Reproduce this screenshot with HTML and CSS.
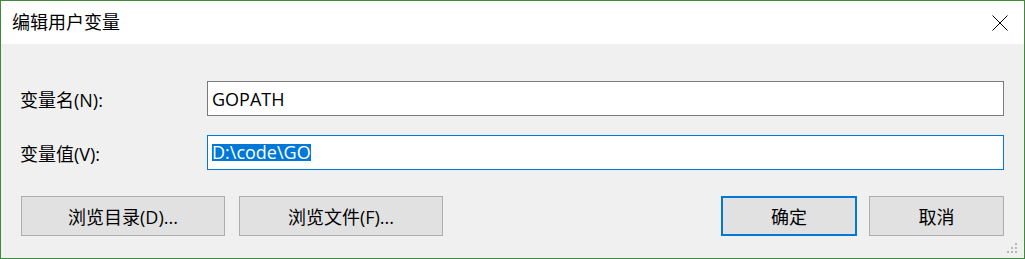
FILE: index.html
```html
<!DOCTYPE html>
<html lang="zh-CN">
<head>
  <meta charset="UTF-8" />
  <meta name="viewport" content="width=device-width, initial-scale=1.0"/>
  <title>编辑用户变量</title>
  <link rel="stylesheet" href="styles.css">
</head>
<body>
  <div class="window">
    <div class="titlebar">
      <span class="title">编辑用户变量</span>
      <button class="close-btn" title="关闭">
        <svg width="16" height="16" viewBox="0 0 16 16">
          <path d="M0.5 0.5 L15.5 15.5 M15.5 0.5 L0.5 15.5" stroke="#000" stroke-width="1" fill="none"/>
        </svg>
      </button>
    </div>

    <div class="content">
      <div class="form-row">
        <label class="field-label">变量名(N):</label>
        <div class="textbox">GOPATH</div>
      </div>
      <div class="form-row">
        <label class="field-label">变量值(V):</label>
        <div class="textbox focused"><span class="selected">D:\code\GO</span></div>
      </div>

      <div class="button-row">
        <div class="button-group">
          <button class="btn wide">浏览目录(D)...</button>
          <button class="btn wide">浏览文件(F)...</button>
        </div>
        <div class="button-group small-gap">
          <button class="btn default">确定</button>
          <button class="btn">取消</button>
        </div>
      </div>
    </div>

    <svg class="grip" width="12" height="12" viewBox="0 0 12 12">
      <rect x="8" y="0" width="2" height="2" fill="#b8b8b8"/>
      <rect x="4" y="4" width="2" height="2" fill="#b8b8b8"/>
      <rect x="8" y="4" width="2" height="2" fill="#b8b8b8"/>
      <rect x="0" y="8" width="2" height="2" fill="#b8b8b8"/>
      <rect x="4" y="8" width="2" height="2" fill="#b8b8b8"/>
      <rect x="8" y="8" width="2" height="2" fill="#b8b8b8"/>
    </svg>
  </div>
</body>
</html>
```

FILE: styles.css
```css
html, body { margin: 0; padding: 0; }
body { font-family: "Open Sans", "Noto Sans CJK SC", sans-serif; font-size: 18px; color: #000; background: #f0f0f0; }

.window {
  position: relative;
  width: 1025px;
  height: 259px;
  box-sizing: border-box;
  border: 1px solid #3f8a3a;
  background: #f0f0f0;
}

.titlebar {
  height: 43px;
  background: #fff;
  display: flex;
  align-items: center;
  justify-content: space-between;
  padding: 0 16px 0 11px;
}
.title { font-size: 18px; line-height: 24px; margin-top: -1px; }
.close-btn { border: none; background: none; padding: 0; width: 16px; height: 16px; display: flex; margin-top: 0; }

.content { padding: 37px 20px 0 19px; }

.form-row { display: flex; align-items: center; margin-bottom: 19px; }
.field-label { width: 187px; flex: none; }

.textbox {
  width: 798px;
  height: 35px;
  box-sizing: border-box;
  border: 1px solid #7a7a7a;
  background: #fff;
  padding: 0 4px;
  display: flex;
  align-items: center;
  line-height: 24px;
}
.textbox.focused { border-color: #0078d7; }
.selected {
  display: inline-block;
  background: #0078d7;
  color: #fff;
  line-height: 17px;
  height: 17px;
}

.button-row { display: flex; justify-content: space-between; margin-top: 26px; }
.button-group { display: flex; gap: 14px; margin-left: 1px; }
.button-group.small-gap { gap: 12px; margin-left: 0; }

.btn {
  font-family: inherit;
  font-size: 18px;
  color: #000;
  height: 40px;
  width: 135px;
  box-sizing: border-box;
  background: #e1e1e1;
  border: 1px solid #adadad;
  padding: 0;
}
.btn.wide { width: 204px; }
.btn.default { width: 136px; border: 2px solid #0078d7; }

.grip { position: absolute; right: 5px; bottom: 3px; }
```
